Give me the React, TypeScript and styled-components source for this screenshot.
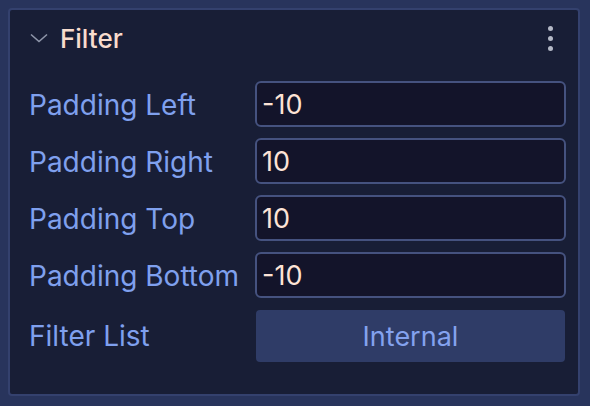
import { FC } from "react";
import styled, { createGlobalStyle } from "styled-components";

const GlobalStyle = createGlobalStyle`
  html, body {
    margin: 0;
    padding: 0;
    background-color: #28345c;
    font-family: Inter, "Liberation Sans", sans-serif;
  }
`;

interface FieldProps {
  label: string;
  value: string;
}

const fields: FieldProps[] = [
  { label: "Padding Left", value: "-10" },
  { label: "Padding Right", value: "10" },
  { label: "Padding Top", value: "10" },
  { label: "Padding Bottom", value: "-10" },
];

const Field: FC<FieldProps> = ({ label, value }) => {
  return (
    <>
      <Label>{label}</Label>
      <Input defaultValue={value} />
    </>
  );
};

const App: FC = () => {
  return (
    <>
      <GlobalStyle />
      <Page>
        <Panel>
          <Header>
            <Chevron width="18" height="10" viewBox="0 0 18 10">
              <path d="M1 1.5 L9 8.5 L17 1.5" />
            </Chevron>
            <Title>Filter</Title>
            <MenuButton aria-label="menu">
              <Dot />
              <Dot />
              <Dot />
            </MenuButton>
          </Header>
          <Grid>
            {fields.map((field) => (
              <Field key={field.label} {...field} />
            ))}
            <Label>Filter List</Label>
            <SelectButton>Internal</SelectButton>
          </Grid>
        </Panel>
      </Page>
    </>
  );
};

export default App;

const Page = styled.div`
  padding: 8px 10px 10px 8px;
  height: 406px;
  box-sizing: border-box;
`;

const Panel = styled.div`
  height: 100%;
  box-sizing: border-box;
  border: 2px solid #34416e;
  border-radius: 4px;
  background-color: #181e36;
  padding: 0 12px 0 19px;
`;

const Header = styled.div`
  display: flex;
  align-items: center;
  height: 56px;
  margin-bottom: 15px;
`;

const Chevron = styled.svg`
  fill: none;
  stroke: #8f96aa;
  stroke-width: 1.6;
  margin-left: 1px;
  margin-right: 12px;
`;

const Title = styled.div`
  flex: 1;
  color: #f8dccd;
  font-size: 26px;
  font-weight: 500;
  margin-top: 1px;
`;

const MenuButton = styled.div`
  display: flex;
  flex-direction: column;
  gap: 5px;
  margin-right: 13px;
`;

const Dot = styled.span`
  width: 5px;
  height: 5px;
  border-radius: 50%;
  background-color: #b4b9c7;
`;

const Grid = styled.div`
  display: grid;
  grid-template-columns: 226px 1fr;
  grid-template-rows: repeat(4, 46px) 52px;
  row-gap: 11px;
  align-items: center;

  & > :last-child {
    margin-top: 2px;
  }
`;

const Label = styled.div`
  color: #7fa0ee;
  font-size: 28px;
  white-space: nowrap;
  margin-top: 1px;
`;

const Input = styled.input`
  height: 46px;
  box-sizing: border-box;
  width: 100%;
  border: 2px solid #45527f;
  border-radius: 6px;
  background-color: #13142a;
  color: #fde3d6;
  font-family: Inter, "Liberation Sans", sans-serif;
  font-size: 27px;
  padding: 0 5px;
  outline: none;
`;

const SelectButton = styled.button`
  box-sizing: border-box;
  height: 52px;
  width: calc(100% - 2px);
  margin-left: 1px;
  border: none;
  border-radius: 4px;
  background-color: #2f3c67;
  color: #84a2ee;
  font-family: Inter, "Liberation Sans", sans-serif;
  font-size: 27px;
  cursor: pointer;
`;
